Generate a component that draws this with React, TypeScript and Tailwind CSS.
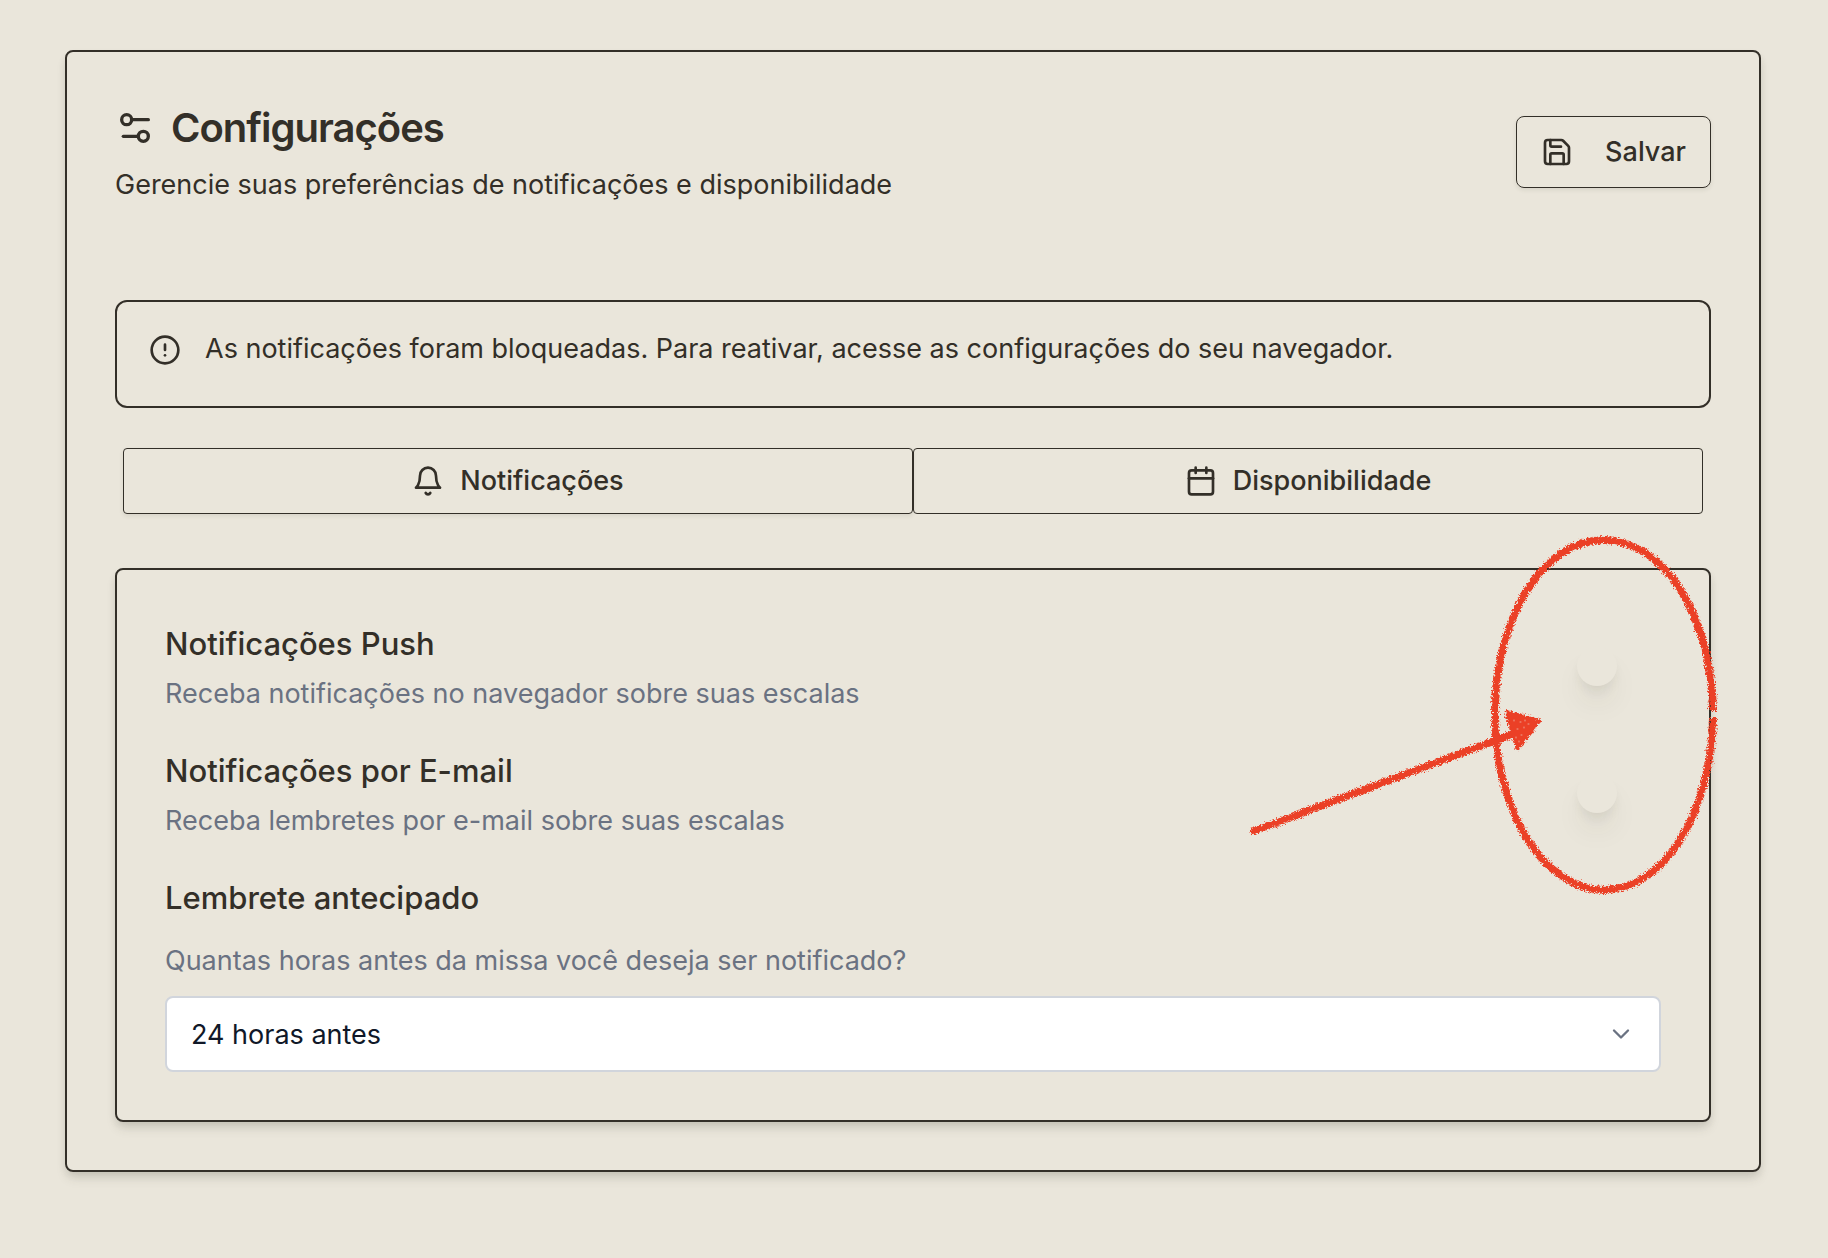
import { useId, useState } from "react";
import type { ReactNode } from "react";
import { Calendar, ChevronDown, CircleAlert, Save } from "lucide-react";

const cardShadow =
  "shadow-[0_8px_12px_-2px_rgba(60,60,40,0.12),0_4px_8px_-2px_rgba(60,60,40,0.14)]";

function SlidersIcon() {
  return (
    <svg
      className="size-10 shrink-0"
      viewBox="0 0 24 24"
      fill="none"
      stroke="currentColor"
      strokeWidth="2"
      strokeLinecap="round"
      strokeLinejoin="round"
      aria-hidden="true"
    >
      <path d="M20 7h-9" />
      <path d="M14 17H5" />
      <circle cx="17" cy="17" r="3" />
      <circle cx="7" cy="7" r="3" />
    </svg>
  );
}

function BellIcon() {
  return (
    <svg
      className="size-8 shrink-0"
      viewBox="0 0 24 24"
      fill="none"
      stroke="currentColor"
      strokeWidth="2"
      strokeLinecap="round"
      strokeLinejoin="round"
      aria-hidden="true"
    >
      <path d="M6 8a6 6 0 0 1 12 0c0 7 3 9 3 9H3s3-2 3-9" />
      <path d="M10.3 21a1.94 1.94 0 0 0 3.4 0" />
    </svg>
  );
}

function Tab({
  icon,
  label,
  active,
  onSelect,
}: {
  icon: ReactNode;
  label: string;
  active: boolean;
  onSelect: () => void;
}) {
  return (
    <button
      type="button"
      role="tab"
      aria-selected={active}
      onClick={onSelect}
      className={
        "flex h-[66px] items-center justify-center gap-4 rounded-sm border border-[#332f28] text-[27px] font-medium leading-10 " +
        (active ? "shadow-[0_2px_4px_rgba(60,60,40,0.1)]" : "")
      }
    >
      {icon}
      {label}
    </button>
  );
}

function SwitchRow({ title, description }: { title: string; description: string }) {
  const id = useId();
  const [on, setOn] = useState(false);
  return (
    <div className="flex items-center justify-between">
      <div>
        <label htmlFor={id} className="block text-[31px] font-medium leading-[52px]">
          {title}
        </label>
        <p className="mt-1 text-[27px] leading-10 text-gray-500">{description}</p>
      </div>
      <input
        id={id}
        type="checkbox"
        role="switch"
        checked={on}
        onChange={() => setOn(!on)}
        className="flex h-12 w-[88px] shrink-0 cursor-pointer appearance-none items-center rounded-full px-1 before:block before:size-10 before:rounded-full before:bg-[#eae6db] before:shadow-[0_20px_30px_-6px_rgba(60,60,40,0.1),0_8px_12px_-4px_rgba(60,60,40,0.1)] before:content-[''] checked:justify-end"
      />
    </div>
  );
}

/* Crayon-style arrow and ellipse that point at the two switches. */
function Annotation() {
  const ellipse =
    "M1713 711C1711 614 1664 540 1603 540C1543 540 1495 618 1495 714C1495 811 1544 890 1604 890C1664 890 1711 813 1713 718";
  const shaft = "M1254 831L1515 733";
  const head = "M1507 713L1538 721L1518 747Z";
  return (
    <svg
      className="pointer-events-none absolute -top-10 -right-[18px] h-[380px] w-[490px]"
      viewBox="1237 530 490 380"
      fill="none"
      stroke="#eb4026"
      strokeLinecap="round"
      strokeLinejoin="round"
      aria-hidden="true"
    >
      <defs>
        <filter id="crayon" filterUnits="userSpaceOnUse" x="1237" y="530" width="490" height="380">
          <feTurbulence type="fractalNoise" baseFrequency="0.4" numOctaves="3" seed="4" result="noise" />
          <feDisplacementMap
            in="SourceGraphic"
            in2="noise"
            scale="6"
            xChannelSelector="R"
            yChannelSelector="G"
          />
        </filter>
        <filter id="grain" filterUnits="userSpaceOnUse" x="1237" y="530" width="490" height="380">
          <feTurbulence type="fractalNoise" baseFrequency="0.7" numOctaves="2" seed="9" result="noise" />
          <feDisplacementMap
            in="SourceGraphic"
            in2="noise"
            scale="6"
            xChannelSelector="G"
            yChannelSelector="R"
            result="rough"
          />
          <feColorMatrix
            in="noise"
            type="matrix"
            values="0 0 0 0 0  0 0 0 0 0  0 0 0 0 0  0 0 12 0 -5.4"
            result="specks"
          />
          <feComposite in="rough" in2="specks" operator="in" />
        </filter>
      </defs>
      <g filter="url(#grain)" strokeWidth="8">
        <path d={ellipse} strokeLinecap="butt" />
        <path d={shaft} />
        <path d={head} strokeWidth="6" />
      </g>
      <g filter="url(#crayon)" strokeWidth="6">
        <path d={ellipse} strokeLinecap="butt" />
        <path d={shaft} />
        <path d={head} fill="#eb4026" strokeWidth="4" />
      </g>
      <g stroke="#eae6db" strokeWidth="1" opacity="0.6">
        <path d="M1514 720v1M1520 722h1M1525 720v1M1517 729h1M1524 727v1M1516 737v1M1521 735h1M1519 741v1M1528 724h1" />
      </g>
    </svg>
  );
}

export default function App() {
  const [tab, setTab] = useState("notificacoes");
  return (
    <div className="min-h-screen bg-[#eae6db] pt-[50px] pr-[67px] pb-[86px] pl-[65px] font-['Inter',sans-serif] text-[#332f28]">
      <main className={"rounded-lg border-2 border-[#332f28] p-12 " + cardShadow}>
        <header className="flex items-center justify-between">
          <div>
            <h1 className="flex items-center gap-4 text-[40px] font-semibold leading-[56px] tracking-tight">
              <SlidersIcon />
              Configurações
            </h1>
            <p className="mt-2.5 text-[27px] leading-[38px]">
              Gerencie suas preferências de notificações e disponibilidade
            </p>
          </div>
          <button
            type="button"
            className="flex h-[72px] items-center gap-8 rounded-lg border border-[#332f28] px-6 text-[27px] font-medium leading-10 shadow-[0_2px_4px_rgba(60,60,40,0.1)]"
          >
            <Save className="size-8" />
            Salvar
          </button>
        </header>

        <div
          role="alert"
          className="mt-24 flex h-[108px] items-start gap-6 rounded-xl border-2 border-[#332f28] px-8 pt-[26px]"
        >
          <CircleAlert className="mt-1.5 size-8 shrink-0" />
          <p className="text-[27px] leading-[42px]">
            As notificações foram bloqueadas. Para reativar, acesse as configurações do seu navegador.
          </p>
        </div>

        <div role="tablist" className="mt-10 grid grid-cols-2 px-2">
          <Tab
            icon={<BellIcon />}
            label="Notificações"
            active={tab === "notificacoes"}
            onSelect={() => setTab("notificacoes")}
          />
          <Tab
            icon={<Calendar className="size-8 shrink-0" />}
            label="Disponibilidade"
            active={tab === "disponibilidade"}
            onSelect={() => setTab("disponibilidade")}
          />
        </div>

        <section
          className={"relative mt-[54px] rounded-lg border-2 border-[#332f28] p-12 " + cardShadow}
        >
          <div className="flex flex-col gap-[31px]">
            <SwitchRow
              title="Notificações Push"
              description="Receba notificações no navegador sobre suas escalas"
            />
            <SwitchRow
              title="Notificações por E-mail"
              description="Receba lembretes por e-mail sobre suas escalas"
            />
            <div>
              <label htmlFor="lembrete" className="block text-[31px] font-medium leading-[52px]">
                Lembrete antecipado
              </label>
              <p className="mt-[17px] text-[27px] leading-10 text-gray-500">
                Quantas horas antes da missa você deseja ser notificado?
              </p>
              <div className="relative mt-[15px]">
                <select
                  id="lembrete"
                  defaultValue="24"
                  className="block h-[76px] w-full appearance-none rounded-lg border-2 border-gray-300 bg-white px-6 pt-0.5 text-[27px] leading-10 text-gray-900"
                >
                  <option value="12">12 horas antes</option>
                  <option value="24">24 horas antes</option>
                  <option value="48">48 horas antes</option>
                </select>
                <ChevronDown className="pointer-events-none absolute top-6 right-[26px] size-7 text-gray-500" />
              </div>
            </div>
          </div>
          <Annotation />
        </section>
      </main>
    </div>
  );
}
